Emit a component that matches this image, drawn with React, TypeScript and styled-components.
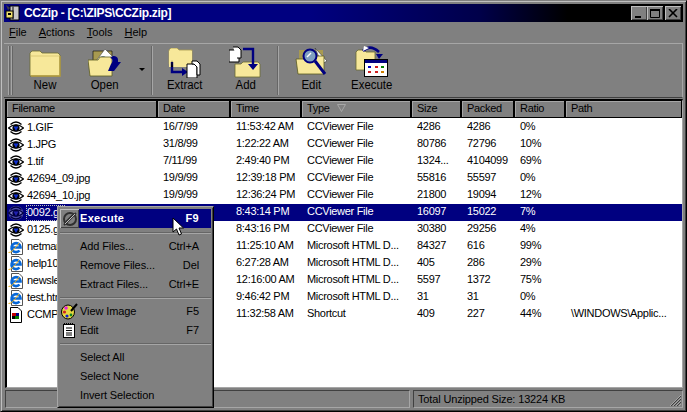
import React from "react";
import styled, { createGlobalStyle } from "styled-components";

const Global = createGlobalStyle`
  html, body { margin: 0; padding: 0; background: #808080; overflow: hidden; }
  * { box-sizing: border-box; }
`;

const Win = styled.div`
  position: relative;
  width: 687px;
  height: 412px;
  background: #808080;
  border-top: 1px solid #808080;
  border-left: 1px solid #808080;
  border-right: 1px solid #000;
  border-bottom: 1px solid #000;
  box-shadow: inset 1px 1px 0 #bfbfbf, inset -1px -1px 0 #404040;
  padding: 3px 3px 4px 3px;
  display: flex;
  flex-direction: column;
  font: 11px "Liberation Sans", Arial, sans-serif;
  letter-spacing: -0.3px;
  color: #000;
  overflow: hidden;
`;
const TitleBar = styled.div`
  height: 18px;
  flex: none;
  background: linear-gradient(90deg, #000080 0%, #000080 45%, #00004a 70%, #000 83%, #000 100%);
  display: flex;
  align-items: center;
  padding: 0 2px 0 1px;
  gap: 3px;
`;
const TitleText = styled.div`
  color: #fff;
  font-weight: 700;
  font-size: 12px;
  flex: 1;
  letter-spacing: -0.3px;
`;
const WinBtn = styled.div<{ $gap?: number }>`
  width: 16px;
  height: 14px;
  margin-left: ${(p) => p.$gap ?? -3}px;
  background: #808080;
  box-shadow: inset 1px 1px 0 #bfbfbf, inset -1px -1px 0 #404040;
  display: flex;
  align-items: center;
  justify-content: center;
`;
const MenuBar = styled.div`
  height: 21px;
  flex: none;
  display: flex;
  align-items: center;
  gap: 12px;
  padding: 0 0 2px 5px;
  letter-spacing: 0;
`;
const U = styled.span`text-decoration: underline;`;
const Toolbar = styled.div`
  height: 55px;
  flex: none;
  border-top: 1px solid #a6a6a6;
  border-right: 1px solid #a6a6a6;
  border-bottom: 1px solid #404040;
  display: flex;
  align-items: stretch;
  padding: 1px 0 1px 4px;
`;
const Grip = styled.div`
  width: 6px;
  margin: 1px 0;
  flex: none;
  background: linear-gradient(90deg, #a6a6a6 1px, #666 1px, #666 2px, #808080 2px, #808080 3px, #a6a6a6 3px, #a6a6a6 4px, #666 4px, #666 5px, transparent 5px);
`;
const Tool = styled.div<{ $w: number }>`
  width: ${(p) => p.$w}px;
  flex: none;
  display: flex;
  flex-direction: column;
  align-items: center;
  letter-spacing: 0;
  font-size: 12px;
`;
const ToolIcon = styled.div`
  height: 33px;
  width: 100%;
  display: flex;
  align-items: flex-end;
  justify-content: center;
`;
const ToolLabel = styled.div`
  line-height: 14px;
  transform: scaleX(0.95);
`;
const Arrow = styled.div`
  flex: none;
  width: 16px;
  display: flex;
  align-items: center;
  justify-content: center;
  &::after {
    content: "";
    border: 3px solid transparent;
    border-top: 3px solid #000;
  }
`;
const Sep = styled.div`
  width: 1px;
  flex: none;
  margin: 1px 2px;
  background: #a6a6a6;
  box-shadow: -1px 0 0 #666;
`;
const ListBox = styled.div`
  flex: 1;
  min-height: 0;
  margin-top: 1px;
  border-top: 2px solid #000;
  border-left: 2px solid #000;
  border-right: 1px solid #a6a6a6;
  border-bottom: 1px solid #a6a6a6;
  margin-left: 1px;
  background: #fff;
  display: flex;
  flex-direction: column;
`;
const cols = "151px 73px 71px 110px 50px 53px 51px 1fr";
const HeaderRow = styled.div`
  display: grid;
  grid-template-columns: ${cols};
  height: 17px;
  flex: none;
  background: #808080;
`;
const HeaderCell = styled.div`
  border-right: 2px solid #000;
  box-shadow: inset 1px 1px 0 #a6a6a6;
  border-bottom: 1px solid #000;
  padding: 0 0 2px 5px;
  display: flex;
  align-items: center;
  gap: 7px;
  overflow: hidden;
  &:last-child { border-right: 1px solid #000; }
`;
const Rows = styled.div`
  flex: 1;
  padding-top: 1px;
  display: flex;
  flex-direction: column;
`;
const Row = styled.div<{ $sel?: boolean }>`
  display: grid;
  grid-template-columns: ${cols};
  height: 17px;
  flex: none;
  background: ${(p) => (p.$sel ? "#000080" : "transparent")};
  color: ${(p) => (p.$sel ? "#fff" : "#000")};
`;
const Cell = styled.div`
  padding-left: 5px;
  line-height: 15px;
  white-space: nowrap;
  overflow: hidden;
`;
const NameCell = styled.div`
  display: flex;
  align-items: center;
  gap: 2px;
  padding-left: 1px;
  white-space: nowrap;
  overflow: hidden;
`;
const NameText = styled.span<{ $sel?: boolean }>`
  line-height: 14px;
  height: 16px;
  padding: 0 1px;
  outline: ${(p) => (p.$sel ? "1px dotted #c0c0c0" : "none")};
  outline-offset: -1px;
`;
const StatusBar = styled.div`
  height: 19px;
  flex: none;
  display: grid;
  grid-template-columns: 405px 1fr;
  gap: 3px;
  padding: 2px 0 0 1px;
`;
const StatusPane = styled.div`
  position: relative;
  border-top: 1px solid #404040;
  border-left: 1px solid #404040;
  border-right: 1px solid #a6a6a6;
  border-bottom: 1px solid #a6a6a6;
  padding-left: 4px;
  line-height: 16px;
  white-space: nowrap;
  letter-spacing: -0.15px;
`;
const SizeGrip = styled.svg`
  position: absolute;
  right: 0;
  bottom: 0;
`;
const Menu = styled.div`
  position: absolute;
  left: 56px;
  top: 205px;
  width: 157px;
  height: 202px;
  background: #808080;
  border-top: 1px solid #a6a6a6;
  border-left: 1px solid #a6a6a6;
  border-right: 1px solid #000;
  border-bottom: 1px solid #000;
  box-shadow: inset 1px 1px 0 #808080, inset -1px -1px 0 #404040;
  padding: 2px 2px;
  display: flex;
  flex-direction: column;
  letter-spacing: -0.1px;
`;
const MenuRow = styled.div`
  height: 19px;
  flex: none;
  display: flex;
  align-items: center;
  color: #000;
`;
const MenuIcon = styled.div<{ $raised?: boolean }>`
  width: 19px;
  height: 19px;
  flex: none;
  display: flex;
  align-items: center;
  justify-content: center;
  box-shadow: ${(p) => (p.$raised ? "inset 1px 1px 0 #bfbfbf, inset -1px -1px 0 #404040" : "none")};
`;
const MenuText = styled.div<{ $active?: boolean }>`
  flex: 1;
  height: 19px;
  padding: 0 12px 2px 1px;
  display: flex;
  align-items: center;
  justify-content: space-between;
  background: ${(p) => (p.$active ? "#000080" : "transparent")};
  color: ${(p) => (p.$active ? "#fff" : "#000")};
  font-weight: ${(p) => (p.$active ? 700 : 400)};
  letter-spacing: ${(p) => (p.$active ? "0.3px" : "-0.1px")};
`;
const MenuSep = styled.div<{ $mt?: number }>`
  height: 2px;
  flex: none;
  margin: ${(p) => p.$mt ?? 3}px 0 3px 0;
  background: linear-gradient(#666 1px, #a6a6a6 1px);
`;
const Cursor = styled.svg`
  position: absolute;
  left: 171px;
  top: 216px;
`;

const Eye = ({ sel }: { sel?: boolean }) => {
  const ink = sel ? "#000040" : "#000";
  return (
    <svg width="16" height="16" viewBox="0 0 16 16">
      {sel && <ellipse cx="8" cy="8" rx="7.5" ry="7" fill="#4c4ca6" />}
      <path d="M2.5 4.5Q8 -0.5 13.5 4.5" fill="none" stroke={ink} strokeWidth="1.4" />
      <path d="M2.5 11.5Q8 16.5 13.5 11.5" fill="none" stroke={ink} strokeWidth="1.4" />
      <path d="M0.5 8Q8 1.5 15.5 8Q8 14.5 0.5 8Z" fill={sel ? "#8080c8" : "#fff"} stroke={ink} strokeWidth="1.2" />
      <circle cx="8" cy="8" r="3.6" fill={ink} />
      <path d="M5.5 6.5H10.5L8 11Z" fill={sel ? "#2020b0" : "#1030d0"} />
    </svg>
  );
};
const IeFile = () => (
  <svg width="16" height="16" viewBox="0 0 16 16">
    <path d="M3.5 .5H11L14.5 4V15.5H3.5Z" fill="#fff" stroke="#555" />
    <path d="M3.5 8.5H12.5V8A4.5 4.5 0 1 0 11.5 11.5" fill="none" stroke="#0868d8" strokeWidth="2.6" />
    <path d="M0.5 13.5Q4 14 11 4" fill="none" stroke="#e8b020" strokeWidth="1" />
  </svg>
);
const Shortcut = () => (
  <svg width="16" height="16" viewBox="0 0 16 16">
    <path d="M2.5 .5H10L13.5 4V15.5H2.5Z" fill="#fff" stroke="#000" />
    <rect x="4" y="6" width="4" height="3" fill="#c00000" />
    <rect x="8" y="6" width="3" height="3" fill="#000080" />
    <rect x="5" y="9" width="6" height="3" fill="#008000" />
    <path d="M4 9l3 0v3H4Z" fill="#000" />
  </svg>
);
const Folder = () => (
  <svg width="32" height="29" viewBox="0 0 32 29">
    <path d="M1 4L3 2H11L13 4H29L31 6V27H1Z" fill="#f7e89a" stroke="#6a6a30" strokeWidth="0.8" />
    <path d="M31 7V27H2" fill="none" stroke="#b8a040" strokeWidth="1.4" />
    <path d="M1 7H31" stroke="#c9b760" strokeWidth="0.6" />
  </svg>
);
const OpenIcon = () => (
  <svg width="34" height="30" viewBox="0 0 34 30">
    <path d="M5 3H24V16H5Z" fill="#a89a50" stroke="#000" strokeWidth=".6" />
    <path d="M8 13L17 1L26 10V16H8Z" fill="#fff" stroke="#444" strokeWidth=".6" />
    <circle cx="15" cy="11" r="3" fill="#6a8aa8" />
    <path d="M0 12H10L12 9H24V28H2Z" fill="#f7e89a" stroke="#5a5a20" strokeWidth=".8" />
    <path d="M25 8C28 8 30 9 30 12V14H33L26 23H20L23 16C25 14 25 10 22 10Z" fill="#000080" />
  </svg>
);
const ExtractIcon = () => (
  <svg width="34" height="30" viewBox="0 0 34 30">
    <path d="M1 2L3 0H9L11 2H24V16H1Z" fill="#f7e89a" stroke="#a89a50" strokeWidth=".8" />
    <path d="M1 3H24V19H1Z" fill="#f7e89a" />
    <path d="M4 14V24H15" fill="none" stroke="#000080" strokeWidth="2.4" />
    <path d="M3 19H5L4 12Z" fill="#000" />
    <path d="M14 20L20 24L14 28Z" fill="#000080" />
    <path d="M19 16H26L29 19V30H19Z" fill="#fff" stroke="#000" strokeWidth="1" />
    <path d="M24 13H29L32 16V27H29V19L26 16H24Z" fill="#fff" stroke="#000" strokeWidth="1" />
  </svg>
);
const AddIcon = () => (
  <svg width="34" height="32" viewBox="0 0 34 32">
    <path d="M0 4H7L10 7V16H0Z" fill="#fff" stroke="#000" />
    <path d="M4 1H9L12 4V12H8" fill="#fff" stroke="#000" />
    <path d="M6 18H12L14 16H29L31 18V31H6Z" fill="#f7e89a" stroke="#6a6a30" strokeWidth=".8" />
    <path d="M14 3H24V19" fill="none" stroke="#000080" strokeWidth="2.4" />
    <path d="M19 18H29L24 24Z" fill="#000080" />
  </svg>
);
const EditIcon = () => (
  <svg width="34" height="32" viewBox="0 0 34 32">
    <path d="M4 4H28V18H4Z" fill="#a89a50" />
    <path d="M20 2L32 15L27 18Z" fill="#fff" stroke="#333" strokeWidth=".6" />
    <path d="M1 13H9L11 10H29V28H3Z" fill="#f7e89a" stroke="#5a5a20" strokeWidth=".8" />
    <circle cx="15" cy="10" r="6.5" fill="#7f9fc0" stroke="#000080" strokeWidth="2" />
    <path d="M20 15L30 28" stroke="#000080" strokeWidth="3" />
    <path d="M12 11L16 7" stroke="#fff" strokeWidth="1.5" />
  </svg>
);
const ExecuteIcon = () => (
  <svg width="34" height="32" viewBox="0 0 34 32">
    <path d="M1 6L3 4H9L11 6H20V24H1Z" fill="#f7e89a" stroke="#6a6a30" strokeWidth=".8" />
    <path d="M8 5Q15 -2 24 6" fill="none" stroke="#000080" strokeWidth="2.6" />
    <path d="M8 5L14 2L9 0Z" fill="#fff" />
    <path d="M21 8H28L24 13Z" fill="#000080" />
    <rect x="9.5" y="13.5" width="23" height="17" fill="#fff" stroke="#000" />
    <rect x="10" y="14" width="22" height="3" fill="#000080" />
    <rect x="13" y="20" width="3" height="2" fill="#0000c0" />
    <rect x="20" y="20" width="3" height="2" fill="#d02020" />
    <rect x="26" y="20" width="3" height="2" fill="#008000" />
    <rect x="13" y="25" width="3" height="2" fill="#d02020" />
    <rect x="20" y="25" width="3" height="2" fill="#d02020" />
    <rect x="26" y="25" width="3" height="2" fill="#d08000" />
  </svg>
);
const AppIcon = () => (
  <svg width="16" height="16" viewBox="0 0 16 16">
    <path d="M5 1H14V15H5Z" fill="#c8c8c8" stroke="#000" />
    <path d="M8 1V15" stroke="#505050" strokeWidth="1.6" />
    <path d="M1 0L5 3L3 5Z" fill="#404040" />
    <rect x="1" y="6" width="7" height="7" fill="#f0e070" stroke="#000" />
    <rect x="3" y="8" width="3" height="2" fill="#000" />
  </svg>
);

type Kind = "eye" | "sel" | "ie" | "lnk";
const rows: [Kind, string, string, string, string, string, string, string, string][] = [
  ["eye", "1.GIF", "16/7/99", "11:53:42 AM", "CCViewer File", "4286", "4286", "0%", ""],
  ["eye", "1.JPG", "31/8/99", "1:22:22 AM", "CCViewer File", "80786", "72796", "10%", ""],
  ["eye", "1.tif", "7/11/99", "2:49:40 PM", "CCViewer File", "1324...", "4104099", "69%", ""],
  ["eye", "42694_09.jpg", "19/9/99", "12:39:18 PM", "CCViewer File", "55816", "55597", "0%", ""],
  ["eye", "42694_10.jpg", "19/9/99", "12:36:24 PM", "CCViewer File", "21800", "19094", "12%", ""],
  ["sel", "0092.gif", "", "8:43:14 PM", "CCViewer File", "16097", "15022", "7%", ""],
  ["eye", "0125.gif", "", "8:43:16 PM", "CCViewer File", "30380", "29256", "4%", ""],
  ["ie", "netmarket.htm", "", "11:25:10 AM", "Microsoft HTML D...", "84327", "616", "99%", ""],
  ["ie", "help10.htm", "", "6:27:28 AM", "Microsoft HTML D...", "405", "286", "29%", ""],
  ["ie", "newsletter.htm", "", "12:16:00 AM", "Microsoft HTML D...", "5597", "1372", "75%", ""],
  ["ie", "test.htm", "", "9:46:42 PM", "Microsoft HTML D...", "31", "31", "0%", ""],
  ["lnk", "CCMP3.lnk", "", "11:32:58 AM", "Shortcut", "409", "227", "44%", "\\WINDOWS\\Applic..."],
];

const FileIcon = ({ kind }: { kind: Kind }) =>
  kind === "ie" ? <IeFile /> : kind === "lnk" ? <Shortcut /> : <Eye sel={kind === "sel"} />;

export default function App() {
  return (
    <Win>
      <Global />
      <TitleBar>
        <AppIcon />
        <TitleText>CCZip - [C:\ZIPS\CCZip.zip]</TitleText>
        <WinBtn $gap={0}>
          <svg width="10" height="9"><rect x="1" y="7" width="6" height="2" fill="#000" /></svg>
        </WinBtn>
        <WinBtn>
          <svg width="10" height="9"><path d="M0.5 1.5H9.5V8.5H0.5Z" fill="none" stroke="#000" /><rect y="0" width="10" height="2" /></svg>
        </WinBtn>
        <WinBtn $gap={-1}>
          <svg width="10" height="9"><path d="M1 0L9 8M9 0L1 8" stroke="#000" strokeWidth="1.6" /></svg>
        </WinBtn>
      </TitleBar>
      <MenuBar>
        <span><U>F</U>ile</span>
        <span><U>A</U>ctions</span>
        <span><U>T</U>ools</span>
        <span><U>H</U>elp</span>
      </MenuBar>
      <Toolbar>
        <Grip />
        <Tool $w={62}><ToolIcon><Folder /></ToolIcon><ToolLabel>New</ToolLabel></Tool>
        <Tool $w={58}><ToolIcon><OpenIcon /></ToolIcon><ToolLabel>Open</ToolLabel></Tool>
        <Arrow />
        <Sep />
        <Tool $w={60}><ToolIcon><ExtractIcon /></ToolIcon><ToolLabel>Extract</ToolLabel></Tool>
        <Tool $w={61}><ToolIcon><AddIcon /></ToolIcon><ToolLabel>Add</ToolLabel></Tool>
        <Sep />
        <Tool $w={61}><ToolIcon><EditIcon /></ToolIcon><ToolLabel>Edit</ToolLabel></Tool>
        <Tool $w={60}><ToolIcon><ExecuteIcon /></ToolIcon><ToolLabel>Execute</ToolLabel></Tool>
      </Toolbar>
      <ListBox>
        <HeaderRow>
          <HeaderCell>Filename</HeaderCell>
          <HeaderCell>Date</HeaderCell>
          <HeaderCell>Time</HeaderCell>
          <HeaderCell>Type
            <svg width="9" height="8"><path d="M.5 .5H8.5L4.5 7.5Z" fill="none" stroke="#a6a6a6" /></svg>
          </HeaderCell>
          <HeaderCell>Size</HeaderCell>
          <HeaderCell>Packed</HeaderCell>
          <HeaderCell>Ratio</HeaderCell>
          <HeaderCell>Path</HeaderCell>
        </HeaderRow>
        <Rows>
          {rows.map((r, i) => (
            <Row key={i} $sel={r[0] === "sel"}>
              <NameCell>
                <FileIcon kind={r[0]} />
                <NameText $sel={r[0] === "sel"}>{r[1]}</NameText>
              </NameCell>
              <Cell>{r[2]}</Cell>
              <Cell>{r[3]}</Cell>
              <Cell>{r[4]}</Cell>
              <Cell>{r[5]}</Cell>
              <Cell>{r[6]}</Cell>
              <Cell>{r[7]}</Cell>
              <Cell>{r[8]}</Cell>
            </Row>
          ))}
        </Rows>
      </ListBox>
      <StatusBar>
        <StatusPane />
        <StatusPane>
          Total Unzipped Size: 13224 KB
          <SizeGrip width="13" height="13" viewBox="0 0 13 13">
            <path d="M12 1L1 12M12 4L4 12M12 7L7 12M12 10L10 12" stroke="#a6a6a6" />
            <path d="M12 2L2 12M12 5L5 12M12 8L8 12" stroke="#404040" />
          </SizeGrip>
        </StatusPane>
      </StatusBar>
      <Menu>
        <MenuRow>
          <MenuIcon $raised>
            <svg width="16" height="16" viewBox="0 0 16 16">
              <circle cx="8" cy="8" r="6" fill="none" stroke="#303030" strokeWidth="2" />
              <path d="M2 14L14 2M4 11L11 4" stroke="#303030" strokeWidth="2" />
              <path d="M3 13L13 3" stroke="#bfbfbf" strokeWidth="1" />
            </svg>
          </MenuIcon>
          <MenuText $active><span>Execute</span><span>F9</span></MenuText>
        </MenuRow>
        <MenuSep $mt={4} />
        <MenuRow><MenuIcon /><MenuText><span>Add Files...</span><span>Ctrl+A</span></MenuText></MenuRow>
        <MenuRow><MenuIcon /><MenuText><span>Remove Files...</span><span>Del</span></MenuText></MenuRow>
        <MenuRow><MenuIcon /><MenuText><span>Extract Files...</span><span>Ctrl+E</span></MenuText></MenuRow>
        <MenuSep />
        <MenuRow>
          <MenuIcon>
            <svg width="17" height="17" viewBox="0 0 17 17">
              <ellipse cx="7" cy="9" rx="6.5" ry="7" fill="#e8d840" stroke="#000" />
              <circle cx="5" cy="5" r="1.8" fill="#e020e0" />
              <circle cx="3.5" cy="9" r="1.6" fill="#d02020" />
              <circle cx="6" cy="13" r="1.6" fill="#1020d0" />
              <circle cx="10" cy="12" r="1.4" fill="#108020" />
              <path d="M10 8L16 1" stroke="#000" strokeWidth="2" />
            </svg>
          </MenuIcon>
          <MenuText><span>View Image</span><span>F5</span></MenuText>
        </MenuRow>
        <MenuRow>
          <MenuIcon>
            <svg width="13" height="16" viewBox="0 0 13 16">
              <rect x=".5" y="1.5" width="11" height="13" fill="#fff" stroke="#000" />
              <path d="M3 5H9M3 7.5H9M3 10H9M3 12H9" stroke="#000" />
              <path d="M1 1H11" stroke="#000" strokeDasharray="1 1" strokeWidth="2" />
            </svg>
          </MenuIcon>
          <MenuText><span>Edit</span><span>F7</span></MenuText>
        </MenuRow>
        <MenuSep />
        <MenuRow><MenuIcon /><MenuText>Select All</MenuText></MenuRow>
        <MenuRow><MenuIcon /><MenuText>Select None</MenuText></MenuRow>
        <MenuRow><MenuIcon /><MenuText>Invert Selection</MenuText></MenuRow>
      </Menu>
      <Cursor width="13" height="20" viewBox="0 0 13 20">
        <path d="M1 1V15L4.5 12L7 18L9.5 17L7 11H11.5Z" fill="#fff" stroke="#000" />
      </Cursor>
    </Win>
  );
}
